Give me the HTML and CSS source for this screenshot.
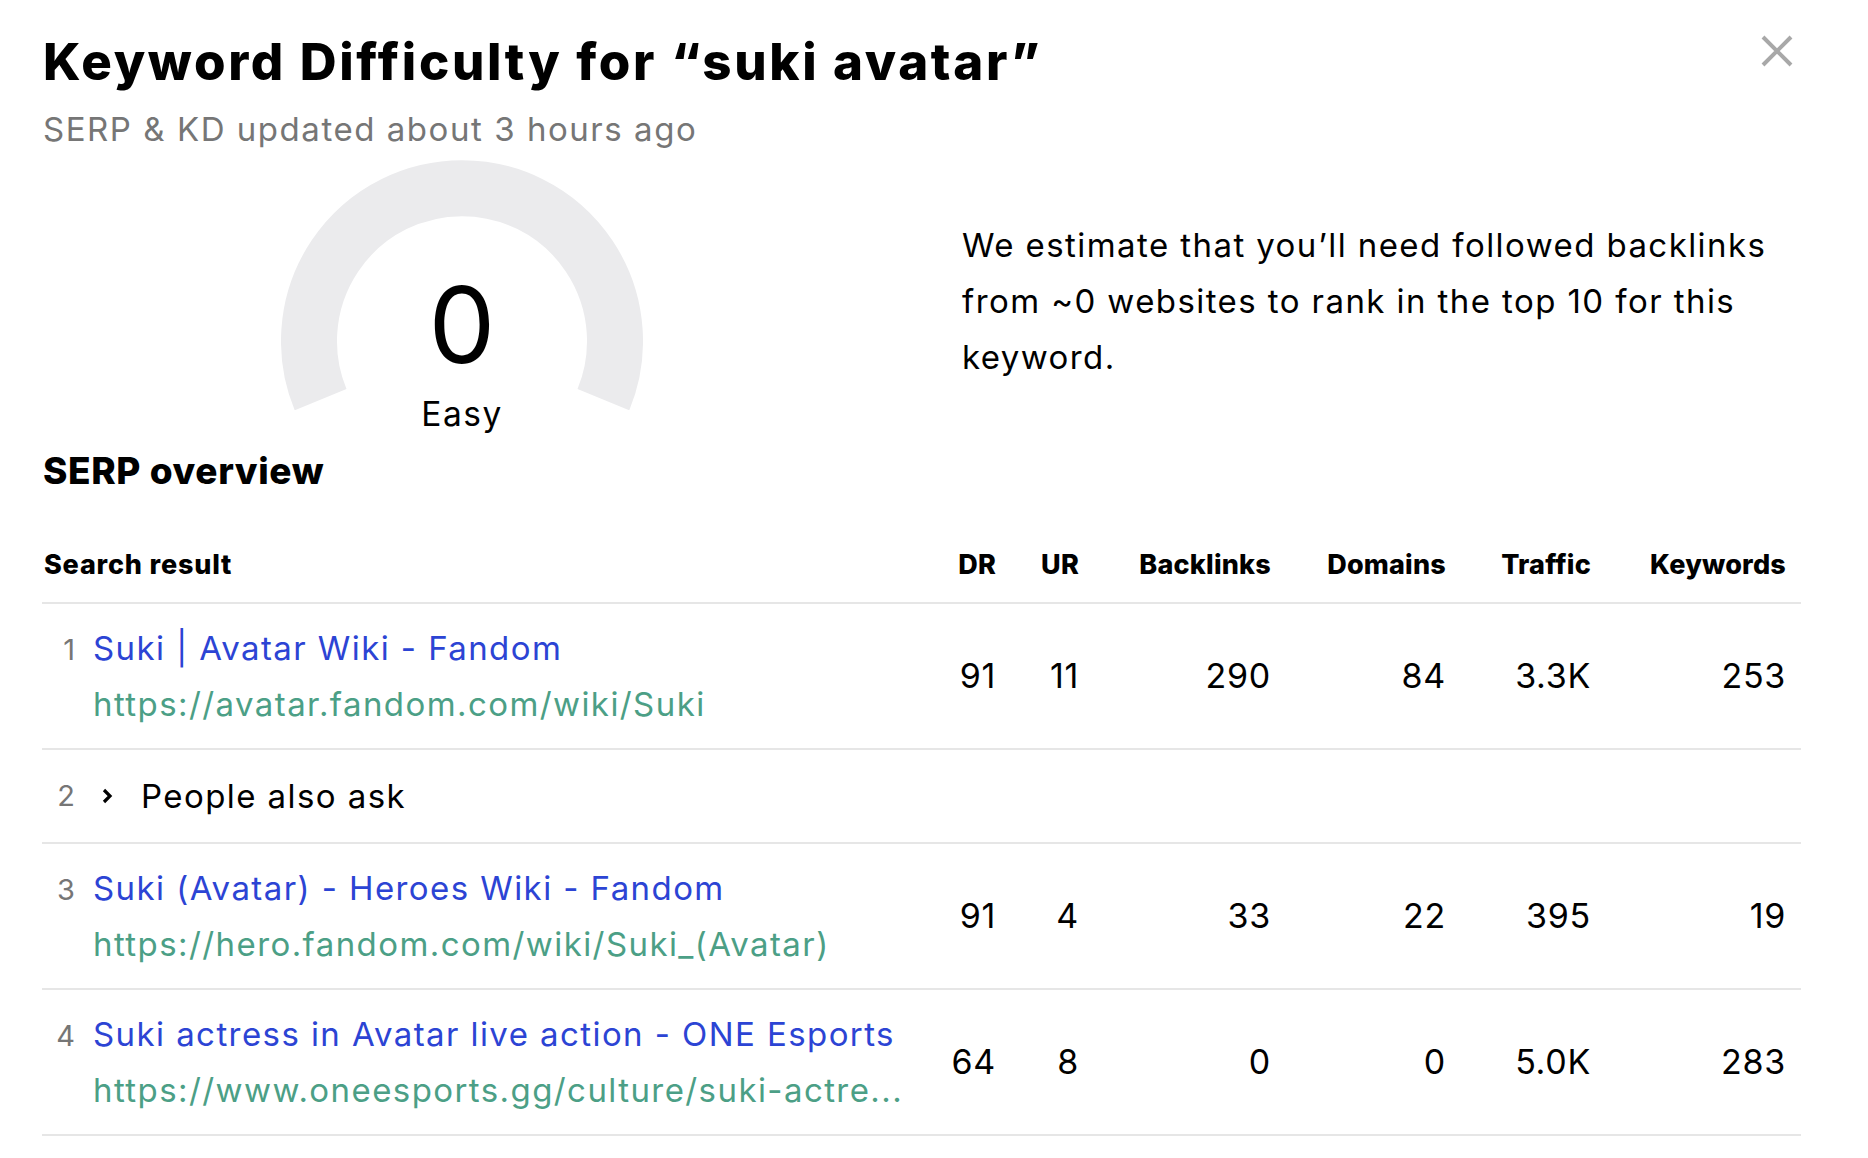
FILE: index.html
```html
<!DOCTYPE html>
<html lang="en">
<head>
<meta charset="utf-8">
<title>Keyword Difficulty</title>
<link rel="stylesheet" href="styles.css">
</head>
<body>
<div class="modal">
  <header class="head">
    <div class="head-text">
      <h1 class="title">Keyword Difficulty for “suki avatar”</h1>
      <p class="subtitle">SERP &amp; KD updated about 3 hours ago</p>
    </div>
    <button class="close" aria-label="Close">
      <svg width="34" height="34" viewBox="0 0 34 34"><path d="M3 3 L31 31 M31 3 L3 31" stroke="#a8a8a8" stroke-width="4" fill="none"/></svg>
    </button>
  </header>

  <section class="summary">
    <div class="gauge-col">
      <div class="gauge">
        <svg class="gauge-svg" width="362" height="250" viewBox="0 0 362 250">
          <path d="M39.6 239.6 A153 153 0 1 1 322.4 239.6" stroke="#ebebed" stroke-width="56" fill="none"/>
        </svg>
        <div class="gauge-num">0</div>
        <div class="gauge-label">Easy</div>
      </div>
    </div>
    <p class="estimate">We estimate that you’ll need followed backlinks from ~0 websites to rank in the top 10 for this keyword.</p>
  </section>

  <h2 class="section-title">SERP overview</h2>

  <div class="table">
    <div class="row thead">
      <div class="cell-search">Search result</div>
      <div class="num">DR</div>
      <div class="num">UR</div>
      <div class="num">Backlinks</div>
      <div class="num">Domains</div>
      <div class="num">Traffic</div>
      <div class="num">Keywords</div>
    </div>

    <div class="row">
      <div class="cell-search">
        <span class="rank">1</span>
        <div class="result">
          <a class="r-title">Suki | Avatar Wiki - Fandom</a>
          <span class="r-url">https://avatar.fandom.com/wiki/Suki</span>
        </div>
      </div>
      <div class="num">91</div>
      <div class="num">11</div>
      <div class="num">290</div>
      <div class="num">84</div>
      <div class="num">3.3K</div>
      <div class="num">253</div>
    </div>

    <div class="row row-paa">
      <div class="cell-search">
        <span class="rank">2</span>
        <svg class="chev" width="12" height="18" viewBox="0 0 12 18"><path d="M3 3 L9 9 L3 15" stroke="#000" stroke-width="3.2" fill="none"/></svg>
        <span class="paa">People also ask</span>
      </div>
    </div>

    <div class="row">
      <div class="cell-search">
        <span class="rank">3</span>
        <div class="result">
          <a class="r-title">Suki (Avatar) - Heroes Wiki - Fandom</a>
          <span class="r-url">https://hero.fandom.com/wiki/Suki_(Avatar)</span>
        </div>
      </div>
      <div class="num">91</div>
      <div class="num">4</div>
      <div class="num">33</div>
      <div class="num">22</div>
      <div class="num">395</div>
      <div class="num">19</div>
    </div>

    <div class="row">
      <div class="cell-search">
        <span class="rank">4</span>
        <div class="result">
          <a class="r-title">Suki actress in Avatar live action - ONE Esports</a>
          <span class="r-url">https://www.oneesports.gg/culture/suki-actre...</span>
        </div>
      </div>
      <div class="num">64</div>
      <div class="num">8</div>
      <div class="num">0</div>
      <div class="num">0</div>
      <div class="num">5.0K</div>
      <div class="num">283</div>
    </div>
  </div>
</div>
</body>
</html>
```

FILE: styles.css
```css
* { box-sizing: border-box; }

html, body {
  margin: 0;
  padding: 0;
  background: #ffffff;
}

body {
  font-family: Inter, "Noto Sans", sans-serif;
  color: #000;
  letter-spacing: 0.72px;
}

.modal {
  width: 1868px;
  padding: 31px 67px 0 42px;
}

.head {
  display: flex;
  justify-content: space-between;
  align-items: flex-start;
}

.head-text { padding-left: 1px; }

.title {
  margin: 0;
  font-size: 51px;
  font-weight: 800;
  line-height: 61px;
  letter-spacing: 2.65px;
}

.subtitle {
  margin: 17px 0 0;
  font-size: 33px;
  line-height: 40px;
  letter-spacing: 1.54px;
  color: #767676;
}

.close {
  border: 0;
  background: none;
  padding: 0;
  margin: 3px 7px 0 0;
  width: 34px;
  height: 34px;
}
.close svg { display: block; }

.summary {
  display: flex;
  margin-top: 11px;
}

.gauge-col {
  width: 840px;
  flex: none;
  display: flex;
  justify-content: center;
}

.gauge {
  position: relative;
  width: 362px;
  height: 289px;
}

.gauge-svg { display: block; }

.gauge-num {
  position: absolute;
  left: 0;
  right: 0;
  top: 101px;
  text-align: center;
  font-size: 106px;
  line-height: 128px;
  font-weight: 400;
  letter-spacing: 0;
}

.gauge-label {
  position: absolute;
  left: 0;
  right: 0;
  top: 234px;
  text-align: center;
  font-size: 33.5px;
  line-height: 40px;
  letter-spacing: 1.5px;
}

.estimate {
  margin: 57px 0 0 80px;
  font-size: 33px;
  line-height: 56px;
  letter-spacing: 1.42px;
}

.section-title {
  margin: 0;
  padding-left: 1px;
  font-size: 37px;
  font-weight: 800;
  line-height: 44px;
  letter-spacing: 0.6px;
}

.table { margin-top: 56px; }

.row {
  display: grid;
  grid-template-columns: 884px 70px 83px 192px 175px 145px 195px;
  border-bottom: 2px solid #e6e6e6;
  padding: 16px 15px 16px 0;
  align-items: center;
}

.thead {
  padding: 0 15px 21px 0;
  font-size: 27px;
  font-weight: 800;
  line-height: 32px;
  letter-spacing: 0.2px;
}
.thead .cell-search { padding-left: 2px; letter-spacing: 0.8px; }

.num {
  text-align: right;
  font-size: 34px;
  line-height: 56px;
}
.thead .num { font-size: 27px; line-height: 32px; }

.cell-search {
  display: flex;
  align-items: baseline;
  min-width: 0;
  padding-right: 20px;
}

.rank {
  width: 33px;
  flex: none;
  text-align: right;
  font-size: 29px;
  line-height: 56px;
  color: #767676;
  margin-right: 18px;
  letter-spacing: 0;
}

.result {
  display: flex;
  flex-direction: column;
  min-width: 0;
}

.r-title {
  font-size: 33px;
  line-height: 56px;
  letter-spacing: 1.42px;
  color: #2c44d4;
  white-space: nowrap;
}

.r-url {
  font-size: 33px;
  line-height: 56px;
  letter-spacing: 1.42px;
  color: #4c9f86;
  white-space: nowrap;
}

.row-paa { padding: 18px 15px 18px 0; }

.row-paa .cell-search { align-items: center; }

.chev {
  flex: none;
  margin: 0 28px 0 8px;
}

.paa {
  font-size: 33px;
  line-height: 56px;
  letter-spacing: 1.42px;
}
```
